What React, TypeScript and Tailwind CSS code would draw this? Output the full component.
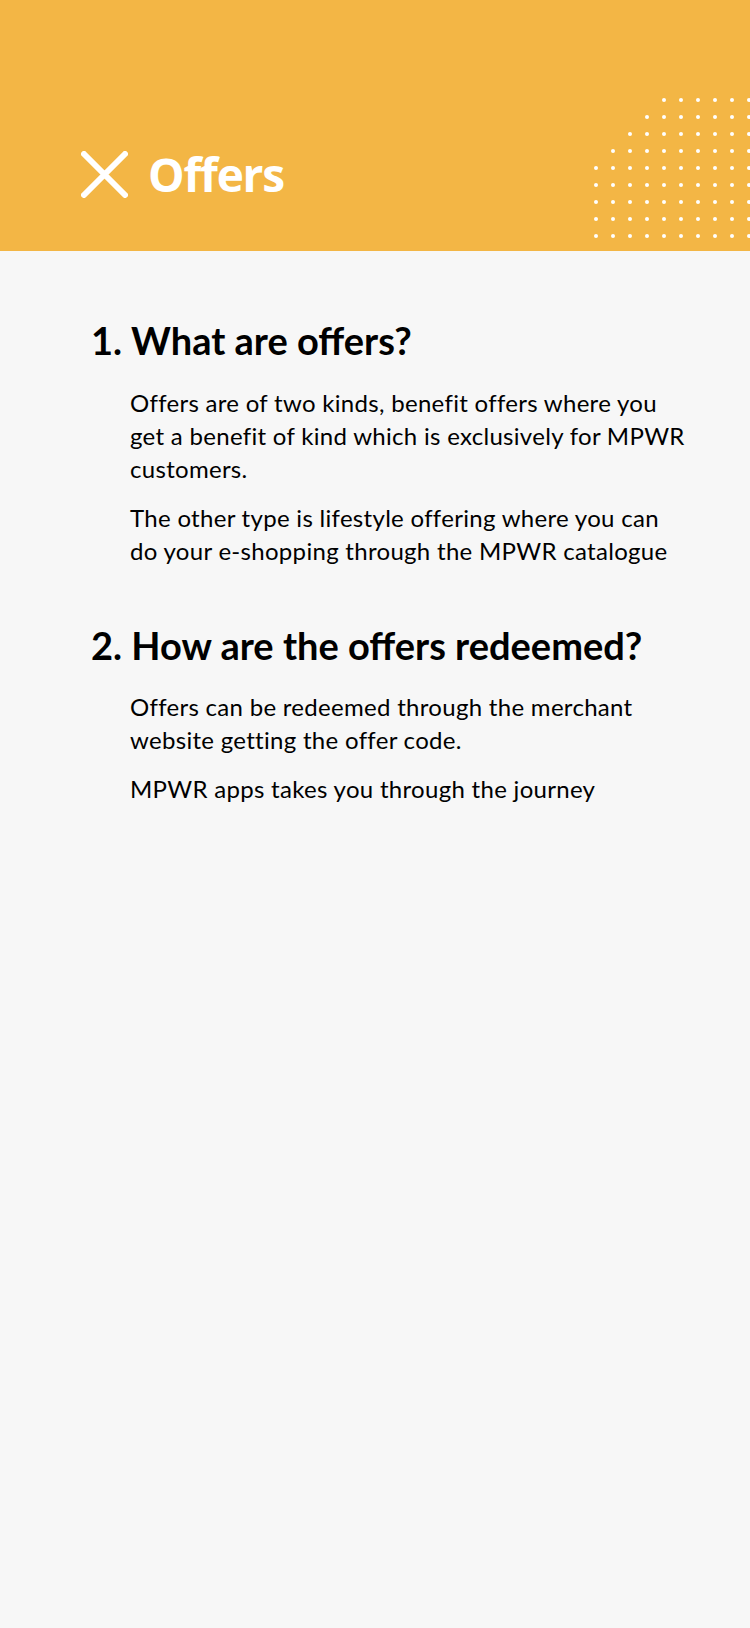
import React from "react";

function Dots() {
  const rows = [];
  const starts = [4, 3, 2, 1, 0, 0, 0, 0, 0];
  for (let r = 0; r < 9; r++) {
    for (let c = starts[r]; c < 10; c++) {
      rows.push(<circle key={`${r}-${c}`} cx={2 + c * 17} cy={2 + r * 17} r={2} fill="#fff" />);
    }
  }
  return (
    <svg className="absolute left-[594px] top-[98px]" width="156" height="144" viewBox="0 0 156 144">
      {rows}
    </svg>
  );
}

export default function App() {
  return (
    <div className="min-h-[1628px] w-[750px] bg-[#f7f7f7] font-['Lato',sans-serif] text-black">
      <header className="relative h-[251px] bg-[#f3b645] overflow-hidden">
        <Dots />
        <div className="flex items-center pl-[81px] pt-[151px] gap-[20px]">
          <svg width="47" height="47" viewBox="0 0 47 47" fill="none">
            <path d="M3 3 L44 44 M44 3 L3 44" stroke="#fff" strokeWidth="6" strokeLinecap="round" />
          </svg>
          <span className="font-['Open_Sans',sans-serif] font-bold text-[46px] leading-[47px] text-white tracking-[-1.2px]">
            Offers
          </span>
        </div>
      </header>
      <main className="pt-[66px] pl-[91px] pr-[60px]">
        <section>
          <h2 className="text-[38px] leading-[46px] font-bold">1. What are offers?</h2>
          <div className="pl-[39px] mt-[23px] text-[24px] leading-[33px] tracking-[0.3px] flex flex-col gap-[16px]">
            <p>Offers are of two kinds, benefit offers where you get a benefit of kind which is exclusively for MPWR customers.</p>
            <p>The other type is lifestyle offering where you can do your e-shopping through the MPWR catalogue</p>
          </div>
        </section>
        <section className="mt-[55px]">
          <h2 className="text-[38px] leading-[46px] font-bold">2. How are the offers redeemed?</h2>
          <div className="pl-[39px] mt-[22px] text-[24px] leading-[33px] tracking-[0.3px] flex flex-col gap-[16px]">
            <p>Offers can be redeemed through the merchant website getting the offer code.</p>
            <p>MPWR apps takes you through the journey</p>
          </div>
        </section>
      </main>
    </div>
  );
}
